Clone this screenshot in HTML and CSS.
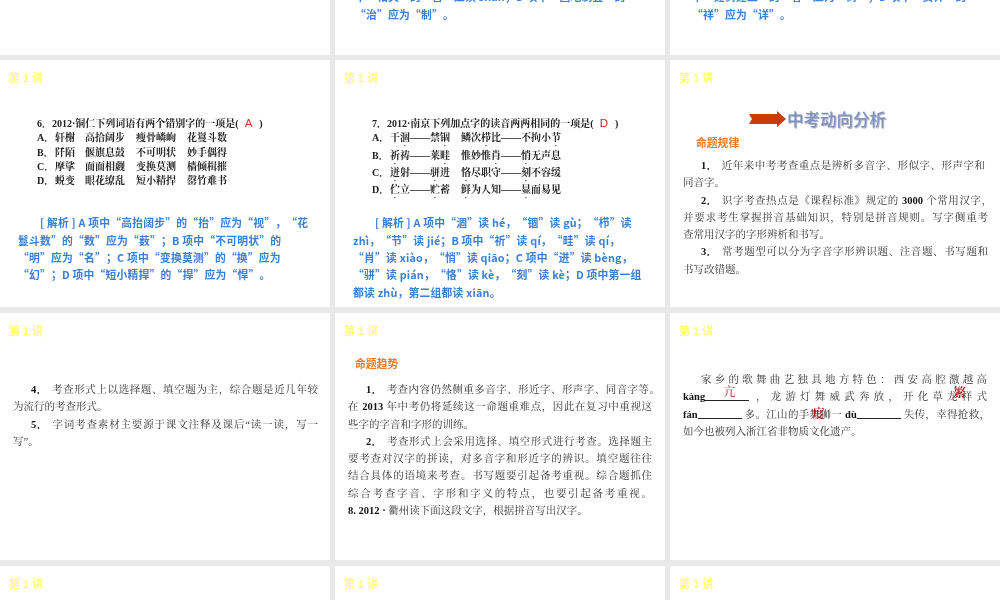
FILE: index.html
```html
<!DOCTYPE html>
<html lang="zh-CN">
<head>
<meta charset="utf-8">
<title>第1讲</title>
<link rel="stylesheet" href="styles.css">
</head>
<body>
<main class="deck">
  <section class="slide first"></section>
  <section class="slide first">
    <div class="tail tail-b">
      <div class="blue">中“相关”的“善”应读 shàn；D 项中“因地制宜”的</div>
      <div class="blue">“治”应为“制”。</div>
    </div>
  </section>
  <section class="slide first">
    <div class="tail tail-c">
      <div class="blue">中“建树建立”的“者”应为“树”；D 项中“安详”的</div>
      <div class="blue">“祥”应为“详”。</div>
    </div>
  </section>

  <section class="slide">
    <div class="label">第 1 讲</div>
    <div class="q q6">
      <div class="stem">6．2012·铜仁下列词语有两个错别字的一项是(<span class="ans ans-a">A</span>)</div>
      <div class="opts"><span>A．</span><span>轩榭</span><span>高拾阔步</span><span>瘦骨嶙峋</span><span>花鬘斗数</span></div>
      <div class="opts"><span>B．</span><span>阡陌</span><span>偃旗息鼓</span><span>不可明状</span><span>妙手偶得</span></div>
      <div class="opts"><span>C．</span><span>摩挲</span><span>面面相觑</span><span>变换莫测</span><span>樯倾楫摧</span></div>
      <div class="opts"><span>D．</span><span>蜕变</span><span>眼花缭乱</span><span>短小精捍</span><span>罄竹难书</span></div>
    </div>
    <div class="blue-block b6">
      <div class="blue first-line">[ 解析 ] A 项中“高抬阔步”的“抬”应为“视”，“花</div>
      <div class="blue">鬘斗数”的“数”应为“薮”；B 项中“不可明状”的</div>
      <div class="blue">“明”应为“名”；C 项中“变换莫测”的“换”应为</div>
      <div class="blue">“幻”；D 项中“短小精捍”的“捍”应为“悍”。</div>
    </div>
  </section>

  <section class="slide">
    <div class="label">第 1 讲</div>
    <div class="q q7">
      <div class="stem">7．2012·南京下列加点字的读音两两相同的一项是(<span class="ans ans-d">D</span>)</div>
      <div class="opt7"><span>A．</span><span>干<em>涸</em>——禁<em>锢</em></span><span>鳞次<em>栉</em>比——不拘小<em>节</em></span></div>
      <div class="opt7"><span>B．</span><span><em>祈</em>祷——莱<em>畦</em></span><span>惟妙惟<em>肖</em>——<em>悄</em>无声息</span></div>
      <div class="opt7"><span>C．</span><span><em>迸</em>射——<em>骈</em>进</span><span><em>恪</em>尽职守——<em>刻</em>不容缓</span></div>
      <div class="opt7"><span>D．</span><span><em>伫</em>立——<em>贮</em>蓄</span><span><em>鲜</em>为人知——<em>显</em>而易见</span></div>
    </div>
    <div class="blue-block b7">
      <div class="blue first-line">[ 解析 ] A 项中“涸”读 hé，“锢”读 gù；“栉”读</div>
      <div class="blue">zhì，“节”读 jié；B 项中“祈”读 qí，“畦”读 qí，</div>
      <div class="blue">“肖”读 xiào，“悄”读 qiāo；C 项中“迸”读 bèng，</div>
      <div class="blue">“骈”读 pián，“恪”读 kè，“刻”读 kè；D 项中第一组</div>
      <div class="blue">都读 zhù，第二组都读 xiān。</div>
    </div>
  </section>

  <section class="slide">
    <div class="label">第 1 讲</div>
    <div class="headline">
      <svg class="arrow" width="38" height="16" viewBox="0 0 38 16" aria-hidden="true"><path d="M0 3H28V0L37 8L28 16V13H0L3 8Z" fill="#c83c0c"/></svg>
      <span class="title">中考动向分析</span>
    </div>
    <div class="orange o1">命题规律</div>
    <div class="doc d3">
      <div class="j in short"><b class="n">1．</b>近年来中考考查重点是辨析多音字、形似字、形声字和</div>
      <div>同音字。</div>
      <div class="j in wide"><b class="n">2．</b>识字考查热点是《课程标准》规定的 <b>3000</b> 个常用汉字，</div>
      <div class="j">并要求考生掌握拼音基础知识，特别是拼音规则。写字侧重考</div>
      <div>查常用汉字的字形辨析和书写。</div>
      <div class="j in"><b class="n">3．</b>常考题型可以分为字音字形辨识题、注音题、书写题和</div>
      <div>书写改错题。</div>
    </div>
  </section>

  <section class="slide">
    <div class="label">第 1 讲</div>
    <div class="doc d4">
      <div class="j in"><b class="n">4．</b>考查形式上以选择题、填空题为主，综合题是近几年较</div>
      <div>为流行的考查形式。</div>
      <div class="j in"><b class="n">5．</b>字词考查素材主要源于课文注释及课后“读一读，写一</div>
      <div>写”。</div>
    </div>
  </section>

  <section class="slide">
    <div class="label">第 1 讲</div>
    <div class="orange o2">命题趋势</div>
    <div class="doc d5">
      <div class="j in wide"><b class="n">1．</b>考查内容仍然侧重多音字、形近字、形声字、同音字等。</div>
      <div class="j">在 <b>2013</b> 年中考仍将延续这一命题重难点，因此在复习中重视这</div>
      <div>些字的字音和字形的训练。</div>
      <div class="j in"><b class="n">2．</b>考查形式上会采用选择、填空形式进行考查。选择题主</div>
      <div class="j">要考查对汉字的拼读，对多音字和形近字的辨识。填空题往往</div>
      <div class="j">结合具体的语境来考查。书写题要引起备考重视。综合题抓住</div>
      <div class="j">综合考查字音、字形和字义的特点，也要引起备考重视。</div>
      <div><b>8. 2012 ·</b> 衢州读下面这段文字，根据拼音写出汉字。</div>
    </div>
  </section>

  <section class="slide">
    <div class="label">第 1 讲</div>
    <div class="doc d9">
      <div class="j in">家乡的歌舞曲艺独具地方特色：西安高腔激越高</div>
      <div class="j"><b>kàng</b><span class="blank"><span class="fix">亢</span></span> ，龙游灯舞威武奔放，开化草龙<span class="over">样<span class="fix fix-b">繁</span></span>式</div>
      <div class="j wide"><b>fán</b><span class="blank"></span> 多。江山的手<span class="over">舞<span class="fix fix-c">度</span></span>狮一 <b>dù</b><span class="blank"></span> 失传，幸得抢救，</div>
      <div>如今也被列入浙江省非物质文化遗产。</div>
    </div>
  </section>

  <section class="slide"><div class="label">第 1 讲</div></section>
  <section class="slide"><div class="label">第 1 讲</div></section>
  <section class="slide"><div class="label">第 1 讲</div></section>
</main>
</body>
</html>
```
FILE: styles.css
```css
* { box-sizing: border-box; }
html, body { margin: 0; height: 600px; overflow: hidden; background: #e9e9e9; }
body { font-family: "Liberation Serif", "Noto Serif CJK SC", "Noto Sans CJK SC", serif; color: #2a2a2a; text-spacing-trim: space-all; }

.deck {
  display: grid;
  grid-template-columns: repeat(3, 330px);
  grid-auto-rows: 247px;
  column-gap: 5px;
  row-gap: 6px;
  height: 793px;
  margin-top: -193px;
}
.slide { background: #fff; padding-top: 12px; overflow: hidden; filter: blur(.35px); }
.slide.first { height: 248px; margin-bottom: -1px; display: flex; flex-direction: column; justify-content: flex-end; padding-bottom: 32px; }

.label { font: bold 11px/12px "Liberation Sans", "Noto Sans CJK SC", sans-serif; color: #ffff80; padding-left: 9px; }

.blue { font: 700 10.8px/17.3px "Noto Sans CJK SC", "Liberation Sans", sans-serif; letter-spacing: .2px; color: #3a80d8; white-space: nowrap; }
.tail-b { padding-left: 20px; }
.tail-c { padding-left: 22px; }

.q { font-size: 10px; font-weight: bold; color: #222; padding-left: 37px; margin-top: 32px; }
.stem { line-height: 14.3px; white-space: nowrap; }
.ans { font: 11.5px/14px "Liberation Sans", sans-serif; color: #c0392b; padding: 0 7px 0 6px; }
.ans-d { color: #c62020; }
.opts { display: grid; grid-template-columns: 18px 30px 51px 51px 50px; line-height: 14.3px; white-space: nowrap; }
.opt7 { display: grid; grid-template-columns: 18px 71px auto; height: 17.4px; line-height: 14px; white-space: nowrap; justify-content: start; }
.opt7 em { font-style: normal; text-emphasis: filled dot; text-emphasis-position: under; -webkit-text-emphasis: filled dot; }

.blue-block { padding-left: 18px; margin-top: 26px; }
.b7 { margin-top: 13.5px; }
.first-line { padding-left: 22px; }

.headline { display: flex; align-items: center; padding-left: 79px; margin-top: 20px; height: 30px; }
.arrow { flex: none; }
.title { font: 500 16.5px/24px "Noto Sans CJK SC", "Liberation Sans", sans-serif; color: #7f93c3; text-shadow: 1px 1px 1px #a6adb8; }
.orange { font: bold 10.8px/14px "Noto Sans CJK SC", "Liberation Sans", sans-serif; color: #e97a28; }
.o1 { padding-left: 26px; margin-top: 1px; }
.o2 { padding-left: 20px; margin-top: 19px; }

.doc { font-size: 10.5px; line-height: 17.3px; padding: 0 12px 0 13px; color: #333; }
.doc > div { white-space: nowrap; }
.doc b { color: #111; }
.doc b.n { margin-right: 4px; }
.doc .j { text-align: justify; text-align-last: justify; }
.doc .in { padding-left: 18px; }
.d3 { margin-top: 8px; }
.d3 .short { margin-right: 3px; }
.d3 .wide { margin-right: -4px; }
.d4 { margin-top: 44px; }
.d5 { margin-top: 11px; padding-right: 13px; }
.d5 .wide { margin-right: -8px; }
.d9 { margin-top: 34px; padding-right: 13px; }
.d9 .wide { margin-right: -3px; }

.blank { display: inline-block; position: relative; width: 44px; height: 12px; border-bottom: 1px solid #222; vertical-align: -1px; }
.fix { position: absolute; left: 18px; top: -4px; color: #b01818; font-size: 12px; line-height: 14px; }
.over { position: relative; }
.fix-b { left: -8px; top: -5px; font-weight: bold; }
.fix-c { left: 3px; top: -2px; font-weight: bold; }
```
